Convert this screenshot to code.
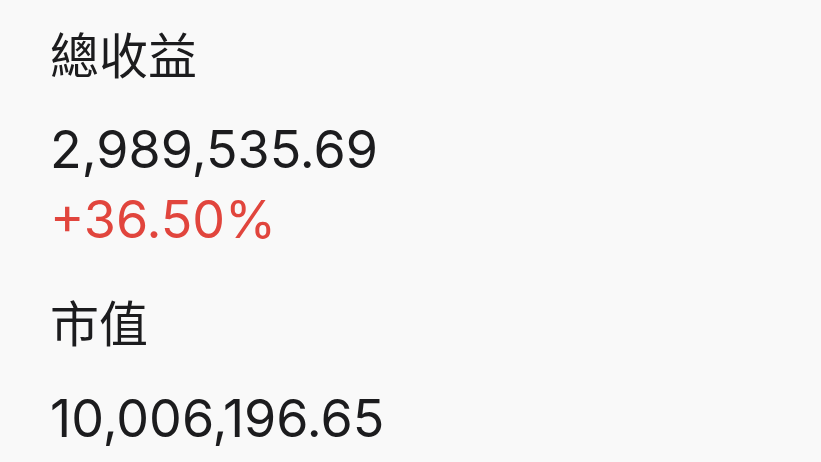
export default function App() {
  const font = { fontFamily: 'Inter, "Noto Sans CJK TC", sans-serif' };
  return (
    <div className="min-h-screen w-full bg-[#f9f9f9] text-[#1c1c1e]" style={font}>
      <div className="pl-[50px] pt-[21px]">
        {/* 總收益 block */}
        <div className="text-[49px] leading-[72px]">總收益</div>
        <div className="mt-[22px] text-[52px] leading-[70px]">2,989,535.69</div>
        <div className="text-[52px] leading-[70px] text-[#e1453d]">+36.50%</div>

        {/* 市值 block */}
        <div className="mt-[34px] text-[49px] leading-[72px]">市值</div>
        <div className="mt-[23px] text-[52px] leading-[70px]">10,006,196.65</div>
      </div>
    </div>
  );
}
